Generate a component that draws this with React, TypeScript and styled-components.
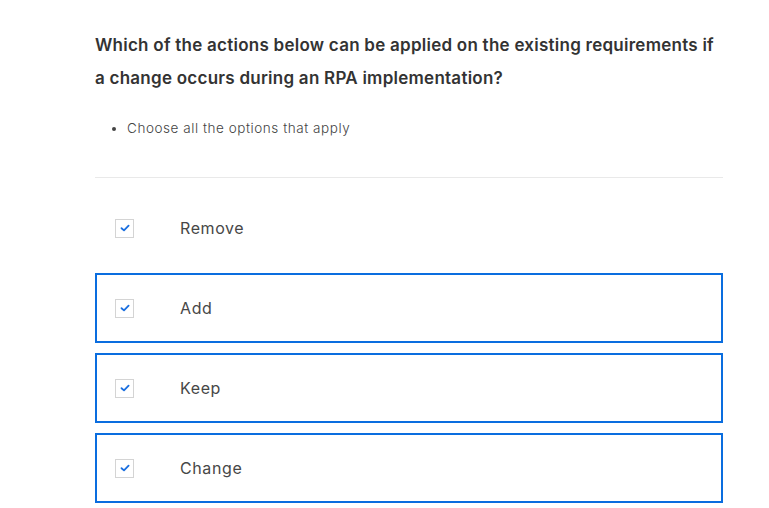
import React from 'react';
import styled, { createGlobalStyle } from 'styled-components';

const GlobalStyle = createGlobalStyle`
	html, body {
		margin: 0;
		padding: 0;
		background: #ffffff;
	}
	body {
		font-family: Inter, 'Open Sans', sans-serif;
		color: #333333;
	}
`;

const Page = styled.main`
	width: 628px;
	padding: 29px 0 0 95px;
`;

const Question = styled.h2`
	margin: 0;
	font-size: 17px;
	font-weight: 600;
	letter-spacing: 0.25px;
	line-height: 33px;
	color: #333333;
`;

const Hints = styled.ul`
	margin: 23px 0 0;
	padding-left: 32px;
	font-size: 13.5px;
	letter-spacing: 0.55px;
	font-weight: 300;
	color: #444444;
	line-height: 20px;
	li::marker {
		font-size: 12px;
	}
`;

const Divider = styled.hr`
	margin: 39px 0 15px;
	border: 0;
	border-top: 1px solid #e9e9e9;
`;

const Options = styled.div`
	display: flex;
	flex-direction: column;
	gap: 10px;
`;

const Option = styled.label<{ selected: boolean }>`
	display: flex;
	align-items: center;
	height: 70px;
	box-sizing: border-box;
	padding-left: 18px;
	border: 2px solid ${({ selected }) => (selected ? '#0a6ddf' : 'transparent')};
	cursor: pointer;
`;

const Box = styled.span`
	display: flex;
	align-items: center;
	justify-content: center;
	width: 19px;
	height: 19px;
	box-sizing: border-box;
	border: 1px solid #d4d4d4;
	background: #ffffff;
`;

const Label = styled.span`
	margin-left: 46px;
	font-size: 16px;
	letter-spacing: 0.6px;
	color: #474747;
`;

const Check = () => (
	<svg width="10" height="8" viewBox="0 0 10 8">
		<path d="M1.5 4.2 L4 6.4 L8.6 1.6" fill="none" stroke="#1a6fe0" strokeWidth="1.8" strokeLinecap="round" strokeLinejoin="round" />
	</svg>
);

const OPTIONS = [
	{ text: 'Remove', selected: false },
	{ text: 'Add', selected: true },
	{ text: 'Keep', selected: true },
	{ text: 'Change', selected: true },
];

export default function App() {
	return (
		<>
			<GlobalStyle />
			<Page>
				<Question>
					Which of the actions below can be applied on the existing requirements if a change occurs during an RPA implementation?
				</Question>
				<Hints>
					<li>Choose all the options that apply</li>
				</Hints>
				<Divider />
				<Options>
					{OPTIONS.map((o) => (
						<Option key={o.text} selected={o.selected}>
							<Box>
								<Check />
							</Box>
							<Label>{o.text}</Label>
						</Option>
					))}
				</Options>
			</Page>
		</>
	);
}
